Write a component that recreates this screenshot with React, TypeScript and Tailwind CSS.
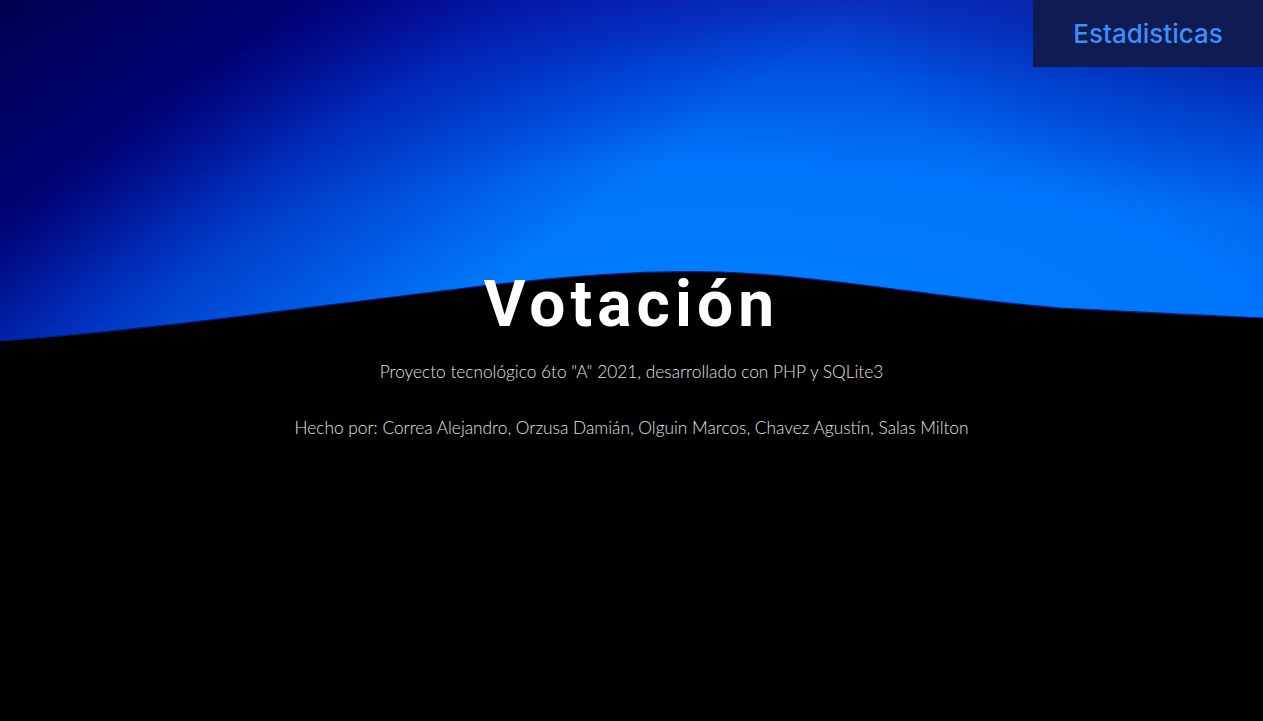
import React from "react";

const Sky = () => (
  <svg
    className="absolute inset-0 h-full w-full"
    viewBox="0 0 1263 721"
    preserveAspectRatio="none"
  >
    <defs>
      <radialGradient id="glow" gradientUnits="userSpaceOnUse" cx="720" cy="330" r="760" gradientTransform="translate(720 330) scale(1.7 0.52) translate(-720 -330)">
        <stop offset="0" stopColor="#0080ff" />
        <stop offset="0.42" stopColor="#0074fa" />
        <stop offset="0.66" stopColor="#0052e2" />
        <stop offset="0.86" stopColor="#0a2cb8" />
        <stop offset="1" stopColor="#081890" />
      </radialGradient>
      <linearGradient id="corner" gradientUnits="userSpaceOnUse" x1="0" y1="0" x2="320" y2="420">
        <stop offset="0" stopColor="#000050" stopOpacity="1" />
        <stop offset="0.35" stopColor="#000070" stopOpacity="0.95" />
        <stop offset="0.6" stopColor="#000090" stopOpacity="0.5" />
        <stop offset="1" stopColor="#0000a0" stopOpacity="0" />
      </linearGradient>
      <radialGradient id="cornerR" gradientUnits="userSpaceOnUse" cx="1263" cy="0" r="420" gradientTransform="translate(1263 0) scale(1 0.5) translate(-1263 0)">
        <stop offset="0" stopColor="#001090" stopOpacity="0.6" />
        <stop offset="1" stopColor="#001090" stopOpacity="0" />
      </radialGradient>
    </defs>
    <rect width="1263" height="721" fill="url(#glow)" />
    <rect width="1263" height="721" fill="url(#corner)" />
    <rect width="1263" height="721" fill="url(#cornerR)" />
    <path
      d="M0 341 C 150 330, 300 308, 450 290 C 560 276, 640 270, 720 272 C 830 276, 950 300, 1060 308 C 1150 313, 1210 316, 1263 318 L1263 721 L0 721 Z"
      fill="#000000"
    />
    <path
      d="M0 341 C 150 330, 300 308, 450 290 C 560 276, 640 270, 720 272 C 830 276, 950 300, 1060 308 C 1150 313, 1210 316, 1263 318"
      fill="none"
      stroke="#0a1a80"
      strokeWidth="1.2"
    />
  </svg>
);

export default function App() {
  return (
    <div className="relative h-[721px] w-full overflow-hidden bg-black font-['Lato',sans-serif]">
      <Sky />
      <div className="relative flex justify-end">
        <a
          href="#"
          className="flex h-[67px] w-[230px] items-center justify-center bg-[#0f1c54] text-[26px] font-medium text-[#3d8ef5] font-['Inter',sans-serif]"
        >
          Estadisticas
        </a>
      </div>
      <div className="relative flex flex-col items-center pt-[206px] text-center">
        <h1 className="text-[64px] font-bold leading-none tracking-[0.08em] text-white font-['Roboto',sans-serif]">
          Votación
        </h1>
        <p className="mt-[22px] text-[17.3px] font-light leading-[26px] text-[#e0e0e0]">
          Proyecto tecnológico 6to "A" 2021, desarrollado con PHP y SQLite3
        </p>
        <p className="mt-[30px] text-[17.3px] font-light leading-[26px] text-[#e0e0e0]">
          Hecho por: Correa Alejandro, Orzusa Damián, Olguin Marcos, Chavez Agustín, Salas Milton
        </p>
      </div>
    </div>
  );
}
